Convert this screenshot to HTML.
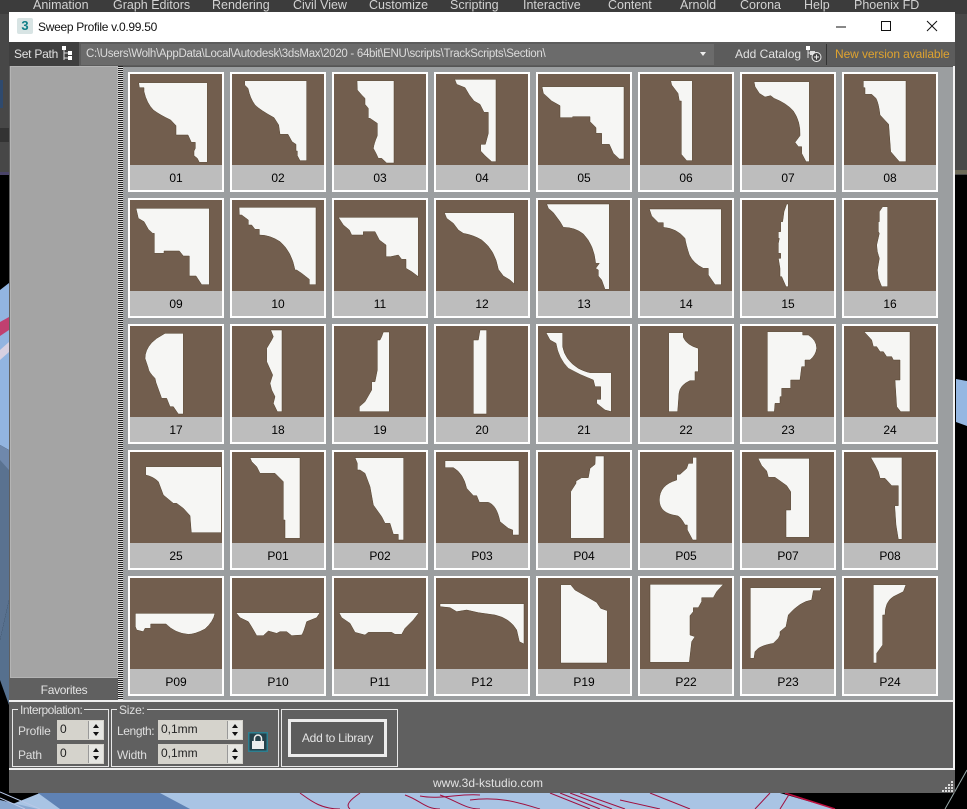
<!DOCTYPE html>
<html><head><meta charset="utf-8"><title>Sweep Profile</title>
<style>
html,body{margin:0;padding:0;background:#000;}
body{position:relative;width:967px;height:809px;overflow:hidden;font-family:"Liberation Sans",sans-serif;font-size:12px;}
div,span,svg{position:absolute;box-sizing:border-box;}
.m{top:-3px;color:#d2d2d2;font-size:12.5px;white-space:nowrap;line-height:16px;}
.t{width:96px;height:120px;border:2px solid #fff;background:#bdbdbd;}
.t svg{left:0;top:0;width:92px;height:91px;background:#725e4e;}
.t svg path{fill:#f6f6f4;stroke:#54432f;stroke-width:1.5;stroke-linejoin:round;}
.t span{left:0;top:92px;width:92px;height:25px;line-height:25px;text-align:center;color:#000;font-size:12px;}
.l{color:#dedede;font-size:12px;line-height:14px;white-space:nowrap;letter-spacing:-.2px;}
.g{border:1px solid #e8e8e8;}
.f{background:#d5d3cc;color:#222;font-size:12px;line-height:18px;padding-left:3px;height:20px;}
.s{width:15px;height:18px;top:1px;background:#e6e6e2;border-left:1px solid #999;}
.s:before{content:"";position:absolute;left:4px;top:3px;border-left:3px solid transparent;border-right:3px solid transparent;border-bottom:4px solid #111;}
.s:after{content:"";position:absolute;left:4px;top:11px;border-left:3px solid transparent;border-right:3px solid transparent;border-top:4px solid #111;}
</style></head><body>

<svg style="left:0;top:0" width="967" height="809" viewBox="0 0 967 809">
<rect width="967" height="809" fill="#000"/>
<rect width="967" height="14" fill="#3c3c3c"/>
<rect y="14" width="10" height="161" fill="#474747"/>
<rect x="955" y="14" width="12" height="161" fill="#484848"/>
<rect x="955" y="170" width="12" height="4" fill="#6d6a58"/>
<rect x="0" y="172" width="10" height="3" fill="#4a4468"/>
<rect x="0" y="80" width="3" height="28" fill="#2f4a6e"/>
<rect x="0" y="128" width="9" height="14" fill="#333"/>
<polygon points="0,290 9,283 9,450 0,445" fill="#92b4e0"/>
<polygon points="0,445 9,450 9,520 0,520" fill="#6f88ac"/>
<polygon points="0,460 9,470 9,600 0,640" fill="#5a7290"/>
<polygon points="0,640 9,600 9,705 0,680" fill="#56708e"/>
<polygon points="0,322 9,317 9,330 0,336" fill="#c04070"/>
<polygon points="0,350 9,342 9,352 0,360" fill="#d8d0e0"/>
<polygon points="956,379 967,381 967,426 956,422" fill="#95b7e2"/>
<polygon points="40,793 780,793 835,809 0,809" fill="#a9c4e4"/>
<polygon points="38,793 160,793 190,809 60,809" fill="#5f82b4"/>
<polygon points="0,800 38,809 0,809" fill="#8aa8d0"/>
<g fill="none" stroke="#a01040" stroke-width="1">
<path d="M300 793 C310 800 320 809 340 809 M360 793 C350 800 345 805 350 809 M405 795 C420 800 425 809 440 809 M440 795 C455 800 465 809 480 809"/>
<path d="M550 793 L590 809 M560 793 L600 809 M570 793 L612 809 M580 793 L625 809 M650 793 L690 809 M770 793 L755 809"/>
<path d="M420 796 C440 800 460 793 480 795 M470 800 C500 796 520 803 540 809 M620 800 L660 809 M790 793 L780 809"/>
</g>
<polygon points="785,793 967,793 967,809 835,809" fill="#000"/>
<path d="M785 793 L835 809" stroke="#c01040" stroke-width="1.5"/>
<path d="M967 770 L945 809" stroke="#9aa" stroke-width="1" fill="none"/>
<path d="M0 792 L40 809 M0 798 L25 809" stroke="#b8c8e8" stroke-width="1" fill="none"/>
</svg>

<span class="m" style="left:33px">Animation</span>
<span class="m" style="left:113px">Graph Editors</span>
<span class="m" style="left:212px">Rendering</span>
<span class="m" style="left:293px">Civil View</span>
<span class="m" style="left:369px">Customize</span>
<span class="m" style="left:450px">Scripting</span>
<span class="m" style="left:523px">Interactive</span>
<span class="m" style="left:608px">Content</span>
<span class="m" style="left:680px">Arnold</span>
<span class="m" style="left:740px">Corona</span>
<span class="m" style="left:804px">Help</span>
<span class="m" style="left:854px">Phoenix FD</span>

<!-- window -->
<div style="left:9px;top:12px;width:946px;height:781px;background:#606060"></div>
<div style="left:9px;top:12px;width:946px;height:30px;background:#fff"></div>
<div style="left:17px;top:18px;width:16px;height:16px;background:#d8e4e4;border-radius:2px;color:#0f7f88;font-weight:bold;font-size:13px;line-height:16px;text-align:center">3</div>
<span style="left:38px;top:19px;color:#111;font-size:12px;line-height:16px;white-space:nowrap;letter-spacing:-.3px">Sweep Profile v.0.99.50</span>
<svg style="left:830px;top:15px" width="115" height="24" viewBox="830 15 115 24"><path d="M836 27H846" stroke="#111" stroke-width="1" fill="none"/><rect x="881.5" y="21.5" width="9" height="9" fill="none" stroke="#111"/><path d="M927 21L937 31M937 21L927 31" stroke="#111" stroke-width="1" fill="none"/></svg>

<!-- toolbar -->
<div style="left:9px;top:42px;width:946px;height:24px;background:#5c5c5c"></div>
<div style="left:9px;top:42px;width:70px;height:24px;background:#3f3f3f"></div>
<span style="left:14px;top:47px;color:#e2e2e2;font-size:12px;line-height:15px;white-space:nowrap;letter-spacing:-.25px">Set Path</span>
<svg style="left:60px;top:45px" width="14" height="18" viewBox="0 0 14 18"><path d="M4 3V15M4 8H9M4 13H9" stroke="#ddd" fill="none"/><rect x="2" y="1" width="4" height="4" fill="#fff"/><rect x="8" y="6" width="4" height="4" fill="#fff"/><rect x="8" y="11" width="4" height="4" fill="#fff"/></svg>
<div style="left:81px;top:44px;width:633px;height:21px;background:#6b6b6b"></div>
<span style="left:86px;top:47px;color:#dcdcdc;font-size:11.5px;line-height:15px;white-space:nowrap;letter-spacing:-.3px">C:\Users\Wolh\AppData\Local\Autodesk\3dsMax\2020 - 64bit\ENU\scripts\TrackScripts\Section\</span>
<div style="left:700px;top:52px;border-left:3px solid transparent;border-right:3px solid transparent;border-top:4px solid #eee"></div>
<span style="left:735px;top:47px;color:#e2e2e2;font-size:12px;line-height:15px;white-space:nowrap">Add Catalog</span>
<svg style="left:805px;top:45px" width="18" height="19" viewBox="0 0 18 19"><path d="M3 3V13M3 8H8" stroke="#ddd" fill="none"/><rect x="1" y="1" width="4" height="4" fill="#fff"/><rect x="5" y="6" width="5" height="4" fill="#ddd"/><circle cx="11.5" cy="12" r="4.5" fill="#444" stroke="#eee"/><path d="M9 12H14M11.5 9.5V14.5" stroke="#eee" fill="none"/></svg>
<div style="left:826px;top:44px;width:1px;height:21px;background:#333"></div>
<span style="left:835px;top:47px;color:#dfa32f;font-size:12px;line-height:15px;white-space:nowrap;letter-spacing:-.1px">New version available</span>

<!-- left list -->
<div style="left:10px;top:66px;width:108px;height:612px;background:#a4a4a4;border:1px solid #b4b4b4"></div>
<div style="left:10px;top:678px;width:108px;height:22px;background:#606060;color:#e4e4e4;font-size:12px;line-height:24px;text-align:center;letter-spacing:-.3px">Favorites</div>
<div style="left:118px;top:66px;width:5px;height:635px;background:repeating-linear-gradient(0deg,#222 0 1px,#ddd 1px 2px)"></div>

<!-- main -->
<div style="left:123px;top:66px;width:830px;height:635px;background:#9b9ea0;border-top:1px solid #555"></div>
<div style="left:953px;top:66px;width:2px;height:703px;background:#f4f4f4"></div>
<div style="left:9px;top:700px;width:946px;height:2px;background:#f0f0f0"></div>
<div style="left:9px;top:768px;width:946px;height:2px;background:#f0f0f0"></div>

<!-- row 1 -->
<div class="t" style="left:128px;top:72px"><svg viewBox="30 27 276 273"><path d="M56 53H262V292H238L232 280L222 272V258L226 250V232H214L204 210H168V182L152 165Q120 150 100 135Q80 115 72 80V68H58Z"/></svg><span>01</span></div>
<div class="t" style="left:230px;top:72px"><svg viewBox="336 27 276 273"><path d="M374 47H560V287H540L532 272V258H528V238L516 230L504 208H480L476 180L462 158Q420 135 405 120Q390 100 384 70L374 60Z"/></svg><span>02</span></div>
<div class="t" style="left:332px;top:72px"><svg viewBox="642 27 276 273"><path d="M711 47H822V294H800L785 280H775L768 265L760 250Q762 235 772 212V175L750 160H745V130L735 118V100L725 90L712 75Z"/></svg><span>03</span></div>
<div class="t" style="left:434px;top:72px"><svg viewBox="948 27 276 273"><path d="M1004 43H1128V290H1115L1095 272L1082 258V238H1096L1105 205V142H1092L1080 118L1062 108L1048 90L1035 68L1010 58Z"/></svg><span>04</span></div>
<div class="t" style="left:536px;top:72px"><svg viewBox="24 27 276 273"><path d="M36 65H282V282H268L250 265L238 238H215V205H198V188L180 170V155H128V158H90V122L65 108L40 85Z"/></svg><span>05</span></div>
<div class="t" style="left:638px;top:72px"><svg viewBox="330 27 276 273"><path d="M422 47H487V287H470L454 268V108H448L444 85L425 60Z"/></svg><span>06</span></div>
<div class="t" style="left:740px;top:72px"><svg viewBox="636 27 276 273"><path d="M672 50H838V290H828L815 265V245H805L795 232L810 212Q812 170 790 138Q770 115 732 100L722 92L705 96L688 85L675 65Z"/></svg><span>07</span></div>
<div class="t" style="left:842px;top:72px"><svg viewBox="942 27 276 273"><path d="M1000 47H1128V290H1108L1082 260L1076 178L1050 150Q1046 115 1038 100L1025 88H1005V68H1000Z"/></svg><span>08</span></div>

<!-- row 2 -->
<div class="t" style="left:128px;top:198px"><svg viewBox="30 30 276 273"><path d="M48 55H268V284H245L228 258H208V198H190L178 183H132V190H103V130H98L85 118L72 95L55 85Z"/></svg><span>09</span></div>
<div class="t" style="left:230px;top:198px"><svg viewBox="336 30 276 273"><path d="M357 52H588V284H568V268L545 250L530 240H525Q515 185 480 155Q450 135 418 135V118H405L395 105H385V90L365 75H358Z"/></svg><span>10</span></div>
<div class="t" style="left:332px;top:198px"><svg viewBox="642 30 276 273"><path d="M655 82H895V260L875 245L858 235V208H845L835 195L812 200H798V165L778 150L765 125H730V135H695L688 120L670 105Z"/></svg><span>11</span></div>
<div class="t" style="left:434px;top:198px"><svg viewBox="948 30 276 273"><path d="M973 68H1183V282L1170 270L1150 258L1135 238Q1125 180 1085 150Q1060 135 1030 130L1015 120L1000 100L980 85Z"/></svg><span>12</span></div>
<div class="t" style="left:536px;top:198px"><svg viewBox="24 30 276 273"><path d="M50 42H238V298H225L215 270L205 258V240L197 235L208 220H197Q192 165 160 132Q135 112 100 112L90 95L70 68L55 55Z"/></svg><span>13</span></div>
<div class="t" style="left:638px;top:198px"><svg viewBox="330 30 276 273"><path d="M358 57H574V284H555L535 255V235H520Q490 220 478 195Q468 165 465 145Q440 115 400 112V98H385L365 78Z"/></svg><span>14</span></div>
<div class="t" style="left:740px;top:198px"><svg viewBox="636 30 276 273"><path d="M770 42H775V290H768L755 260H750V235L745 205H752V190H745V160L748 145H745V125H752V95H758L762 65Z"/></svg><span>15</span></div>
<div class="t" style="left:842px;top:198px"><svg viewBox="942 30 276 273"><path d="M1058 50H1073V290H1055L1045 265L1042 240L1048 205Q1040 185 1040 165L1048 130L1045 125V95H1048V65Z"/></svg><span>16</span></div>

<!-- row 3 -->
<div class="t" style="left:128px;top:324px"><svg viewBox="30 408 276 273"><path d="M135 430H190V672H175L160 650H150L140 625H125L108 578L105 565Q85 545 85 535L75 505Q75 480 95 458L110 445Z"/></svg><span>17</span></div>
<div class="t" style="left:230px;top:324px"><svg viewBox="336 408 276 273"><path d="M452 420H486V665H472L460 640L465 620L455 600L450 580L458 555L440 515V475L455 450L460 440Z"/></svg><span>18</span></div>
<div class="t" style="left:332px;top:324px"><svg viewBox="642 408 276 273"><path d="M790 426H808V665H718V650L735 635L755 600V575H765L772 540V450H780L785 440Z"/></svg><span>19</span></div>
<div class="t" style="left:434px;top:324px"><svg viewBox="948 408 276 273"><path d="M1080 420H1100V672H1060V450H1075Z"/></svg><span>20</span></div>
<div class="t" style="left:536px;top:324px"><svg viewBox="24 408 276 273"><path d="M48 428H98V470Q105 510 145 535Q165 545 180 548H244V665L225 660L200 640V628H212V590H195L190 570Q150 555 115 535Q85 505 78 460L60 450Z"/></svg><span>21</span></div>
<div class="t" style="left:638px;top:324px"><svg viewBox="330 408 276 273"><path d="M416 428H460V442Q470 465 505 475V545H495V572H480Q450 585 447 610L443 665H416Z"/></svg><span>22</span></div>
<div class="t" style="left:740px;top:324px"><svg viewBox="636 408 276 273"><path d="M712 425H818V435H835Q860 450 860 475Q858 495 840 510H825V530H815L810 570H782V595H755V620H750V640H735L733 665H712Z"/></svg><span>23</span></div>
<div class="t" style="left:842px;top:324px"><svg viewBox="942 408 276 273"><path d="M1002 425H1140V665H1112L1100 650L1095 570H1110V510H1090L1085 500H1070L1060 485H1050L1040 470H1030L1025 450Z"/></svg><span>24</span></div>

<!-- row 4 -->
<div class="t" style="left:128px;top:450px"><svg viewBox="30 21 276 273"><path d="M77 65H304V263H214L210 212L190 190L170 175H160L130 150L115 110Q100 95 77 90Z"/></svg><span>25</span></div>
<div class="t" style="left:230px;top:450px"><svg viewBox="336 21 276 273"><path d="M390 38H540V280H495V225H490V110L465 85H420L410 65L395 50Z"/></svg><span>P01</span></div>
<div class="t" style="left:332px;top:450px"><svg viewBox="642 21 276 273"><path d="M705 38H851V285H835V268H820L810 235H795L785 215L760 180L750 125L735 85L720 75H712V55Z"/></svg><span>P02</span></div>
<div class="t" style="left:434px;top:450px"><svg viewBox="948 21 276 273"><path d="M975 47H1197V270H1178V255L1165 250L1140 230Q1130 180 1105 172H1078L1070 152H1060L1040 130Q1030 85 1000 68H975Z"/></svg><span>P03</span></div>
<div class="t" style="left:536px;top:450px"><svg viewBox="24 21 276 273"><path d="M196 33H222V280H122V140L138 115V108L155 98H175L180 70L195 58Z"/></svg><span>P04</span></div>
<div class="t" style="left:638px;top:450px"><svg viewBox="330 21 276 273"><path d="M488 37H500V285H488L472 255V240H465Q450 212 440 212Q388 205 388 165Q388 120 440 105V88H450L470 70L475 55H488Z"/></svg><span>P05</span></div>
<div class="t" style="left:740px;top:450px"><svg viewBox="636 21 276 273"><path d="M684 40H838V277H768V195H782V140L770 122L735 97H715L710 78L695 62Z"/></svg><span>P07</span></div>
<div class="t" style="left:842px;top:450px"><svg viewBox="942 21 276 273"><path d="M1022 37H1116V283H1105L1098 240L1094 182H1105V122H1085L1065 100H1050L1045 80L1035 60Z"/></svg><span>P08</span></div>

<!-- row 5 -->
<div class="t" style="left:128px;top:576px"><svg viewBox="30 399 276 273"><path d="M46 505H285Q280 530 255 552Q225 568 205 568Q165 565 138 537H92V550H75L70 560L50 555L46 545Z"/></svg><span>P09</span></div>
<div class="t" style="left:230px;top:576px"><svg viewBox="336 399 276 273"><path d="M348 503H600L590 518L560 530Q550 565 545 570L515 572L500 560H480L470 565L445 558L430 572H410Q395 545 385 530L360 518Z"/></svg><span>P10</span></div>
<div class="t" style="left:332px;top:576px"><svg viewBox="642 399 276 273"><path d="M657 503H897L880 525L855 550L845 568H825L815 562H745L735 570L705 562L690 535L665 518Z"/></svg><span>P11</span></div>
<div class="t" style="left:434px;top:576px"><svg viewBox="948 399 276 273"><path d="M960 476H1212V597L1198 590L1190 555Q1170 520 1125 510L1075 503L1040 495L1010 500L990 488L960 485Z"/></svg><span>P12</span></div>
<div class="t" style="left:536px;top:576px"><svg viewBox="24 399 276 273"><path d="M92 419H122L135 435L165 452L200 472L212 490L232 497V654H92Z"/></svg><span>P19</span></div>
<div class="t" style="left:638px;top:576px"><svg viewBox="330 399 276 273"><path d="M360 418H580L560 440L550 458H515V470L505 488H490V500L480 512V570L495 575L485 590L478 652H360Z"/></svg><span>P22</span></div>
<div class="t" style="left:740px;top:576px"><svg viewBox="636 399 276 273"><path d="M661 428H875L870 437H850L845 465Q810 470 775 510L768 545L750 560V570L745 580L730 595Q700 600 685 610L675 620L672 640H661Z"/></svg><span>P23</span></div>
<div class="t" style="left:842px;top:576px"><svg viewBox="942 399 276 273"><path d="M1030 419H1128L1120 440L1090 455Q1065 470 1065 510H1058V600L1040 625V654H1030Z"/></svg><span>P24</span></div>

<!-- bottom panel -->
<div class="g" style="left:12px;top:709px;width:97px;height:58px"></div>
<div class="g" style="left:111px;top:709px;width:168px;height:58px"></div>
<div class="g" style="left:281px;top:709px;width:117px;height:58px"></div>
<span class="l" style="left:18px;top:703px;background:#606060;padding:0 2px;letter-spacing:-.5px">Interpolation:</span>
<span class="l" style="left:117px;top:703px;background:#606060;padding:0 2px">Size:</span>
<span class="l" style="left:18px;top:724px">Profile</span>
<span class="l" style="left:18px;top:748px">Path</span>
<div class="f" style="left:57px;top:720px;width:47px"><span style="position:static">0</span><div class="s" style="left:31px"></div></div>
<div class="f" style="left:57px;top:744px;width:47px"><span style="position:static">0</span><div class="s" style="left:31px"></div></div>
<span class="l" style="left:117px;top:724px;letter-spacing:-.4px">Length:</span>
<span class="l" style="left:117px;top:748px">Width</span>
<div class="f" style="left:158px;top:720px;width:85px"><span style="position:static">0,1mm</span><div class="s" style="left:69px"></div></div>
<div class="f" style="left:158px;top:744px;width:85px"><span style="position:static">0,1mm</span><div class="s" style="left:69px"></div></div>
<svg style="left:248px;top:732px" width="20" height="20" viewBox="0 0 20 20"><rect x=".75" y=".75" width="18.5" height="18.5" fill="#26414a" stroke="#2d7f90" stroke-width="1.5"/><rect x="4" y="9" width="12" height="8" fill="#eee"/><path d="M6.5 9V6.5a3.5 3.5 0 0 1 7 0V9" fill="none" stroke="#eee" stroke-width="1.5"/></svg>
<div style="left:288px;top:719px;width:99px;height:38px;border:3px solid #ececec;background:#5c5c5c;color:#e4e4e4;font-size:12px;line-height:32px;text-align:center;letter-spacing:-.25px">Add to Library</div>

<!-- footer -->
<span style="left:433px;top:776px;color:#e2e2e2;font-size:12px;line-height:15px;white-space:nowrap">www.3d-kstudio.com</span>
<svg style="left:942px;top:780px" width="12" height="12" viewBox="0 0 12 12" fill="#ddd"><rect x="9" y="1" width="2" height="2"/><rect x="6" y="4" width="2" height="2"/><rect x="9" y="4" width="2" height="2"/><rect x="3" y="7" width="2" height="2"/><rect x="6" y="7" width="2" height="2"/><rect x="9" y="7" width="2" height="2"/><rect x="0" y="10" width="2" height="2"/><rect x="3" y="10" width="2" height="2"/><rect x="6" y="10" width="2" height="2"/><rect x="9" y="10" width="2" height="2"/></svg>

</body></html>
